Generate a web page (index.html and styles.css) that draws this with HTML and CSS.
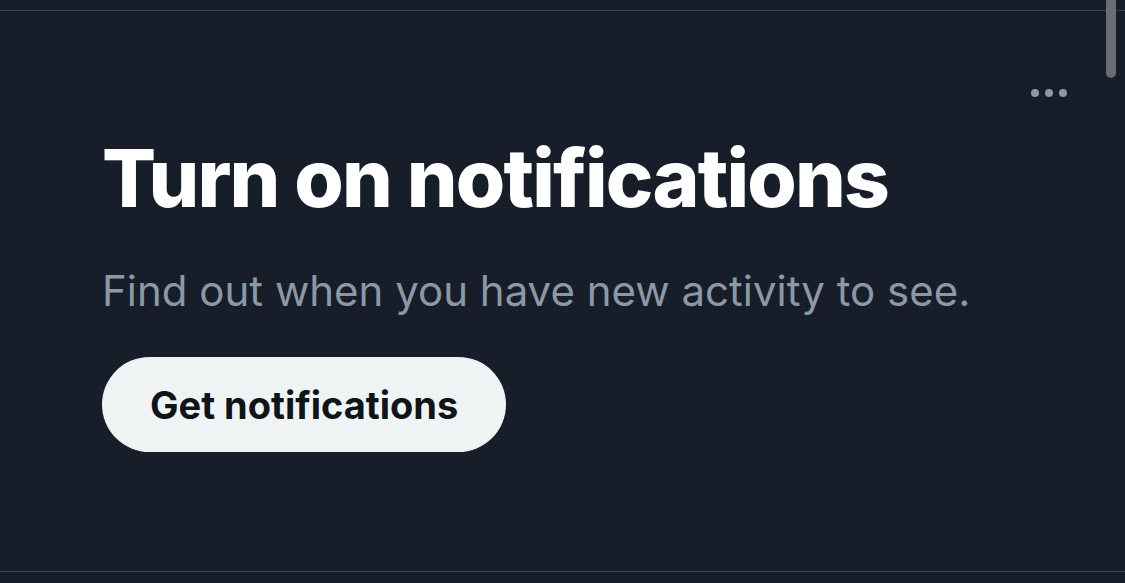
FILE: index.html
```html
<!DOCTYPE html>
<html lang="en">
<head>
    <meta charset="UTF-8">
    <meta name="viewport" content="width=device-width, initial-scale=1.0">
    <title>Notifications</title>
    <link rel="stylesheet" href="styles.css">
</head>
<body>
    <div class="scrollbar"></div>
    <div class="card">
        <div class="card-top">
            <button class="more" aria-label="More">
                <span></span><span></span><span></span>
            </button>
        </div>
        <h1 class="title">Turn on notifications</h1>
        <p class="subtitle">Find out when you have new activity to see.</p>
        <button class="cta">Get notifications</button>
    </div>
</body>
</html>
```

FILE: styles.css
```css
body {
    margin: 0;
    background-color: #171e29;
    font-family: Inter, "Noto Sans", sans-serif;
    height: 583px;
    overflow: hidden;
}
.scrollbar {
    position: absolute;
    top: -10px;
    right: 9px;
    width: 10px;
    height: 88px;
    border-radius: 5px;
    background: #6a6e73;
}
.card {
    margin-top: 10px;
    height: 562px;
    box-sizing: border-box;
    border-top: 1px solid #3a414b;
    border-bottom: 1px solid #3a414b;
    padding: 0 102px;
}
.card-top {
    display: flex;
    justify-content: flex-end;
    margin-right: -44px;
    padding-top: 78px;
}
.more {
    display: flex;
    gap: 6px;
    background: none;
    border: none;
    padding: 0;
}
.more span {
    width: 8px;
    height: 8px;
    border-radius: 50%;
    background: #8b98a5;
}
.title {
    margin: 36px 0 0;
    color: #ffffff;
    font-size: 80px;
    font-weight: 800;
    letter-spacing: -1.8px;
    line-height: 90px;
}
.subtitle {
    margin: 42px 0 0;
    color: #8b98a5;
    font-size: 42px;
    font-weight: 400;
    line-height: 52px;
}
.cta {
    margin-top: 40px;
    height: 95px;
    padding: 0 48px;
    border: none;
    border-radius: 48px;
    background: #eff3f4;
    color: #0f1419;
    font-family: inherit;
    font-size: 38px;
    font-weight: 700;
}
```
